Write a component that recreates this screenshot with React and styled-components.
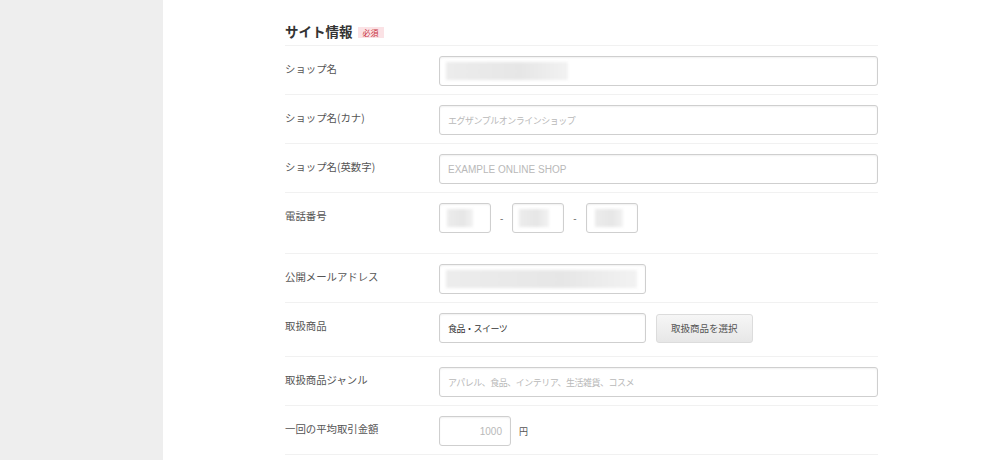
import React from 'react';
import styled, { createGlobalStyle } from 'styled-components';


const GlobalStyle = createGlobalStyle`
html, body, #root {
  height: 100%;
  margin: 0;
}
body {
  background: #fff;
  font-family: "Liberation Sans", "Noto Sans CJK JP", sans-serif;
  color: #555;
}
`;

const Page = styled.div`
display: flex;
height: 460px;
overflow: hidden;
`;

const Sidebar = styled.aside`
width: 163px;
flex-shrink: 0;
background: #eeeeee;
`;

const Main = styled.main`
flex: 1;
padding-left: 122px;
`;

const Section = styled.section`
width: 593px;
`;

const SectionHeader = styled.div`
display: flex;
align-items: center;
gap: 5px;
padding: 22px 0 5px;
border-bottom: 1px solid #f1f1f1;
`;

const Title = styled.h2`
margin: 0;
font-size: 13.5px;
line-height: 18px;
font-weight: bold;
color: #333;
font-family: "Noto Sans CJK JP", sans-serif;
`;

const Badge = styled.span`
display: inline-block;
background: #fbe2e5;
color: #c8323e;
font-size: 8px;
line-height: 11px;
padding: 0 5px;
margin-top: 2px;
font-family: "Noto Sans CJK JP", sans-serif;
`;

const Row = styled.div`
display: grid;
grid-template-columns: 154px 1fr;
padding: 10px 0 ${({ pb }) => pb || 8}px;
border-bottom: 1px solid #f1f1f1;
`;

const Label = styled.div`
padding-top: 5px;
font-size: 10.4px;
line-height: 16px;
color: #555;
font-family: "Noto Sans CJK JP", sans-serif;
`;

const Controls = styled.div`
display: flex;
align-items: center;
gap: ${({ gap }) => gap || 10}px;
`;

const Field = styled.div`
box-sizing: border-box;
display: flex;
align-items: center;
justify-content: ${({ right }) => right ? 'flex-end' : 'flex-start'};
width: ${({ w }) => w ? `${w}px` : '100%'};
height: 30px;
padding: 0 8px;
border: 1px solid #cfcfcf;
border-radius: 3px;
background: #fff;
box-shadow: inset 0 1px 2px rgba(0, 0, 0, 0.06);
font-size: ${({ latin }) => latin ? 10 : 9}px;
letter-spacing: ${({ latin }) => latin ? 0 : -0.5}px;
color: ${({ filled }) => filled ? '#333' : '#b9b9b9'};
white-space: nowrap;
overflow: hidden;
`;

const Blur = styled.span`
display: block;
width: ${({ w }) => w}px;
height: 18px;
margin-left: ${({ ml }) => ml || 0}px;
background: linear-gradient(90deg, #ececec, #e6e6e6 60%, #f2f2f2);
filter: blur(1.5px);
`;

const Dash = styled.span`
font-size: 10px;
color: #777;
`;

const Unit = styled.span`
font-size: 9px;
color: #555;
font-family: "Noto Sans CJK JP", sans-serif;
`;

const SelectButton = styled.button`
height: 29px;
padding: 0 14px;
border: 1px solid #dcdcdc;
border-radius: 3px;
background: linear-gradient(#f6f6f6, #e7e7e7);
color: #555;
font-size: 9.5px;
font-family: "Noto Sans CJK JP", sans-serif;
cursor: pointer;
`;


const App = () => (
  <Page>
    <GlobalStyle />
    <Sidebar />
    <Main>
      <Section>
        <SectionHeader>
          <Title>サイト情報</Title>
          <Badge>必須</Badge>
        </SectionHeader>

        <Row>
          <Label>ショップ名</Label>
          <Controls>
            <Field><Blur w={122} ml={-2} /></Field>
          </Controls>
        </Row>

        <Row>
          <Label>ショップ名(カナ)</Label>
          <Controls>
            <Field>エグザンプルオンラインショップ</Field>
          </Controls>
        </Row>

        <Row>
          <Label>ショップ名(英数字)</Label>
          <Controls>
            <Field latin>EXAMPLE ONLINE SHOP</Field>
          </Controls>
        </Row>

        <Row pb={20}>
          <Label>電話番号</Label>
          <Controls gap={9}>
            <Field w={52}><Blur w={26} ml={-1} /></Field>
            <Dash>-</Dash>
            <Field w={52}><Blur w={30} ml={-2} /></Field>
            <Dash>-</Dash>
            <Field w={52}><Blur w={28} ml={0} /></Field>
          </Controls>
        </Row>

        <Row>
          <Label>公開メールアドレス</Label>
          <Controls>
            <Field w={207}><Blur w={192} ml={-2} /></Field>
          </Controls>
        </Row>

        <Row pb={13}>
          <Label>取扱商品</Label>
          <Controls>
            <Field w={207} filled>食品・スイーツ</Field>
            <SelectButton>取扱商品を選択</SelectButton>
          </Controls>
        </Row>

        <Row>
          <Label>取扱商品ジャンル</Label>
          <Controls>
            <Field>アパレル、食品、インテリア、生活雑貨、コスメ</Field>
          </Controls>
        </Row>

        <Row>
          <Label>一回の平均取引金額</Label>
          <Controls gap={8}>
            <Field w={72} right latin>1000</Field>
            <Unit>円</Unit>
          </Controls>
        </Row>
      </Section>
    </Main>
  </Page>
);


export default App;
